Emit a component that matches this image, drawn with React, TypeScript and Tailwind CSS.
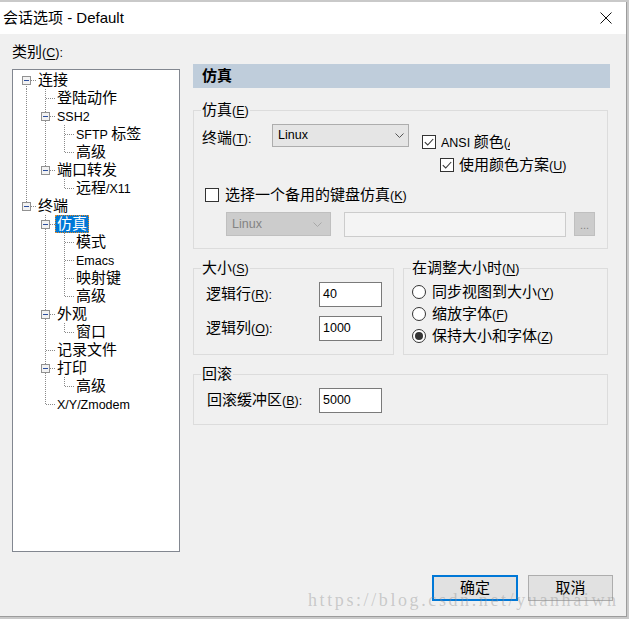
import React from "react";

const CJK = /([\u2E80-\u9FFF\uF900-\uFAFF\uFF00-\uFFEF\u3000-\u303F]+)/;
const CJK_TEST = /[\u2E80-\u9FFF\uF900-\uFAFF\uFF00-\uFFEF\u3000-\u303F]/;

function Mn({ t }: { t: string }) {
  const idx = t.indexOf("&");
  if (idx < 0) return <>{t}</>;
  return (
    <>
      {t.slice(0, idx)}
      <span className="underline underline-offset-[2px]">{t.charAt(idx + 1)}</span>
      {t.slice(idx + 2)}
    </>
  );
}

function M({ t }: { t: string }) {
  const parts = t.split(CJK).filter((p) => p.length > 0);
  return (
    <>
      {parts.map((p, i) =>
        CJK_TEST.test(p) ? (
          <span key={i} className="text-[15px]">
            {p}
          </span>
        ) : (
          <span key={i} className="text-[12.5px]">
            <Mn t={p} />
          </span>
        )
      )}
    </>
  );
}

type TNode = { l: string; c?: TNode[]; sel?: boolean };

const tree: TNode[] = [
  {
    l: "连接",
    c: [
      { l: "登陆动作" },
      { l: "SSH2", c: [{ l: "SFTP 标签" }, { l: "高级" }] },
      { l: "端口转发", c: [{ l: "远程/X11" }] },
    ],
  },
  {
    l: "终端",
    c: [
      { l: "仿真", sel: true, c: [{ l: "模式" }, { l: "Emacs" }, { l: "映射键" }, { l: "高级" }] },
      { l: "外观", c: [{ l: "窗口" }] },
      { l: "记录文件" },
      { l: "打印", c: [{ l: "高级" }] },
      { l: "X/Y/Zmodem" },
    ],
  },
];

type Flat = { n: TNode; depth: number; anc: boolean[]; hasNext: boolean; first: boolean };

function flatten(nodes: TNode[], depth: number, anc: boolean[], out: Flat[], isRoot: boolean) {
  nodes.forEach((n, i) => {
    const hasNext = i < nodes.length - 1;
    out.push({ n, depth, anc: [...anc], hasNext, first: isRoot && i === 0 });
    if (n.c) flatten(n.c, depth + 1, [...anc, hasNext], out, false);
  });
}

const LINE = "#8a8a8a";

function Cell({ top, bottom, horiz, box }: { top?: boolean; bottom?: boolean; horiz?: boolean; box?: boolean }) {
  const y1 = top ? 0 : 9;
  const y2 = bottom ? 18 : 9;
  return (
    <svg width="19" height="18" className="shrink-0 block" shapeRendering="crispEdges">
      {y2 > y1 && (
        <line x1="9.5" y1={y1} x2="9.5" y2={y2} stroke={LINE} strokeDasharray="1 1" />
      )}
      {horiz && <line x1={box ? 14 : 10} y1="9.5" x2="19" y2="9.5" stroke={LINE} strokeDasharray="1 1" />}
      {box && (
        <g>
          <rect x="5.5" y="5.5" width="8" height="8" fill="#f2f2f2" stroke="#919191" />
          <line x1="7" y1="9.5" x2="12" y2="9.5" stroke="#2d4f9e" />
        </g>
      )}
    </svg>
  );
}

function Tree() {
  const rows: Flat[] = [];
  flatten(tree, 0, [], rows, true);
  return (
    <div className="w-[168px] h-[483px] border border-[#828790] bg-white pt-[1px] pl-[4px]">
      {rows.map((r, i) => (
        <div key={i} className="flex h-[18px] items-start">
          {r.anc.map((a, j) => (
            <Cell key={j} top={a} bottom={a} />
          ))}
          <Cell top={!r.first} bottom={r.hasNext} horiz box={!!r.n.c} />
          <div
            className={
              "h-[18px] leading-[18px] px-[2px] whitespace-nowrap " +
              (r.n.sel ? "bg-[#0078d7] text-white outline outline-1 outline-dotted outline-[#e08a2a] -outline-offset-1" : "text-black")
            }
          >
            <M t={r.n.l} />
          </div>
        </div>
      ))}
    </div>
  );
}

function Check({ checked }: { checked?: boolean }) {
  return (
    <span className="w-[14px] h-[14px] border border-[#333333] bg-white flex items-center justify-center shrink-0">
      {checked && (
        <svg width="10" height="8" viewBox="0 0 10 8">
          <path d="M0.8 4.2 L3.7 7 L9.2 1" fill="none" stroke="#333333" strokeWidth="1.1" />
        </svg>
      )}
    </span>
  );
}

function Radio({ checked }: { checked?: boolean }) {
  return (
    <span className="w-[14px] h-[14px] rounded-full border border-[#333333] bg-white flex items-center justify-center shrink-0">
      {checked && <span className="w-[8px] h-[8px] rounded-full bg-[#333333]" />}
    </span>
  );
}

function Chevron({ color }: { color: string }) {
  return (
    <svg width="9" height="5" viewBox="0 0 9 5" className="block">
      <polyline points="0.5,0.5 4.5,4.5 8.5,0.5" fill="none" stroke={color} strokeWidth="1" />
    </svg>
  );
}

function Legend({ t }: { t: string }) {
  return (
    <legend className="ml-[7px] px-[1px] h-[20px] leading-[20px] text-black">
      <M t={t} />
    </legend>
  );
}

function TextBox({ v }: { v: string }) {
  return (
    <div className="w-[63px] h-[25px] border border-[#7a7a7a] bg-white pl-[3px] flex items-center text-[12.5px] text-black">
      {v}
    </div>
  );
}

export default function App() {
  return (
    <div className="w-[629px] h-[619px] bg-[#c9c9c9] relative overflow-hidden font-['Liberation_Sans','Noto_Sans_CJK_SC',sans-serif] text-black">
      <div className="mt-[2px] w-[627px] h-[615px] border-r border-b border-[#9c9c9c] bg-[#f0f0f0] flex flex-col">
        {/* title bar */}
        <div className="h-[32px] bg-white flex items-center pl-[3px] shrink-0">
          <span className="text-[15px] leading-[20px]">会话选项 - Default</span>
          <svg width="12" height="12" viewBox="0 0 12 12" className="ml-auto mr-[14px]">
            <path d="M0.5 0.5 L11.5 11.5 M11.5 0.5 L0.5 11.5" stroke="#111" strokeWidth="1" fill="none" />
          </svg>
        </div>

        {/* body */}
        <div className="flex flex-col pl-[12px] pt-[9px]">
          <div className="flex items-start">
            {/* left column */}
            <div className="w-[168px] flex flex-col">
              <div className="h-[18px] leading-[18px] whitespace-nowrap">
                <M t="类别(&C):" />
              </div>
              <div className="mt-[8px]">
                <Tree />
              </div>
            </div>

            {/* right column */}
            <div className="ml-[13px] w-[417px] pt-[21px] flex flex-col">
              <div className="h-[24px] bg-[#bfcddb] pl-[9px] leading-[24px] text-[15px] font-bold">仿真</div>

              {/* group 1 */}
              <fieldset className="mt-[12px] w-[415px] border border-[#dcdcdc] pb-[11px]">
                <Legend t="仿真(&E)" />
                <div className="pl-[8px] flex flex-col">
                  <div className="mt-[4px] h-[23px] flex items-start">
                    <div className="w-[70px] h-[23px] leading-[23px] pt-[2px] whitespace-nowrap">
                      <M t="终端(&T):" />
                    </div>
                    <div className="w-[137px] h-[23px] border border-[#adadad] bg-[#e5e5e5] flex items-center justify-between pl-[5px] pr-[4px]">
                      <span className="text-[12.5px]">Linux</span>
                      <Chevron color="#555555" />
                    </div>
                    <div className="ml-[13px] mt-[9px] flex items-center">
                      <Check checked />
                      <div className="ml-[5px] w-[69px] overflow-hidden whitespace-nowrap h-[18px] leading-[18px]">
                        <M t="ANSI 颜色(&A)" />
                      </div>
                    </div>
                  </div>
                  <div className="mt-[11px] ml-[238px] h-[14px] flex items-center">
                    <Check checked />
                    <div className="ml-[5px] whitespace-nowrap h-[18px] leading-[18px]">
                      <M t="使用颜色方案(&U)" />
                    </div>
                  </div>
                  <div className="mt-[16px] ml-[3px] h-[14px] flex items-center">
                    <Check />
                    <div className="ml-[6px] whitespace-nowrap h-[18px] leading-[18px]">
                      <M t="选择一个备用的键盘仿真(&K)" />
                    </div>
                  </div>
                  <div className="mt-[10px] ml-[24px] flex items-start">
                    <div className="w-[105px] h-[24px] border border-[#bfbfbf] bg-[#cccccc] flex items-center justify-between pl-[5px] pr-[8px]">
                      <span className="text-[12.5px] text-[#838383]">Linux</span>
                      <Chevron color="#a8a8a8" />
                    </div>
                    <div className="ml-[13px] w-[222px] h-[25px] border border-[#cccccc] bg-[#f4f4f4]" />
                    <div className="ml-[8px] w-[21px] h-[24px] border border-[#bfbfbf] bg-[#cccccc] flex items-end justify-center pb-[4px]">
                      <span className="text-[11px] leading-[11px] text-[#838383]">...</span>
                    </div>
                  </div>
                </div>
              </fieldset>

              {/* group row 2 */}
              <div className="mt-[9px] flex gap-[9px] items-stretch">
                <fieldset className="w-[201px] border border-[#dcdcdc] pb-[13px]">
                  <Legend t="大小(&S)" />
                  <div className="pl-[12px] flex flex-col">
                    <div className="mt-[4px] h-[25px] flex items-center">
                      <div className="w-[113px] whitespace-nowrap leading-[18px]">
                        <M t="逻辑行(&R):" />
                      </div>
                      <TextBox v="40" />
                    </div>
                    <div className="mt-[9px] h-[25px] flex items-center">
                      <div className="w-[113px] whitespace-nowrap leading-[18px]">
                        <M t="逻辑列(&O):" />
                      </div>
                      <TextBox v="1000" />
                    </div>
                  </div>
                </fieldset>
                <fieldset className="w-[205px] border border-[#dcdcdc] pb-[7px]">
                  <Legend t="在调整大小时(&N)" />
                  <div className="pl-[8px] pt-[3px] flex flex-col">
                    {[
                      { t: "同步视图到大小(&Y)", c: false },
                      { t: "缩放字体(&F)", c: false },
                      { t: "保持大小和字体(&Z)", c: true },
                    ].map((r, i) => (
                      <div key={i} className="h-[22px] flex items-center">
                        <Radio checked={r.c} />
                        <div className="ml-[6px] whitespace-nowrap leading-[18px]">
                          <M t={r.t} />
                        </div>
                      </div>
                    ))}
                  </div>
                </fieldset>
              </div>

              {/* group 3 */}
              <fieldset className="mt-[9px] w-[415px] border border-[#dcdcdc] pb-[11px]">
                <Legend t="回滚" />
                <div className="pl-[13px] flex flex-col">
                  <div className="mt-[4px] h-[25px] flex items-center">
                    <div className="w-[112px] whitespace-nowrap leading-[18px]">
                      <M t="回滚缓冲区(&B):" />
                    </div>
                    <TextBox v="5000" />
                  </div>
                </div>
              </fieldset>
            </div>
          </div>

          {/* footer buttons */}
          <div className="mt-[23px] pr-[13px] flex justify-end gap-[10px]">
            <button className="w-[86px] h-[26px] border-2 border-[#0078d7] bg-[#e1e1e1] text-[15px] leading-[20px] text-black">
              确定
            </button>
            <button className="w-[85px] h-[26px] border border-[#adadad] bg-[#e1e1e1] text-[15px] leading-[20px] text-black">
              取消
            </button>
          </div>
        </div>
      </div>

      {/* watermark */}
      <div className="absolute left-[308px] top-[588px] h-[24px] leading-[24px] text-[18px] tracking-[2.6px] font-['Liberation_Serif',serif] text-[#8c8c8c]/40 whitespace-nowrap pointer-events-none">
        https://blog.csdn.net/yuanhaiwn
      </div>
    </div>
  );
}
